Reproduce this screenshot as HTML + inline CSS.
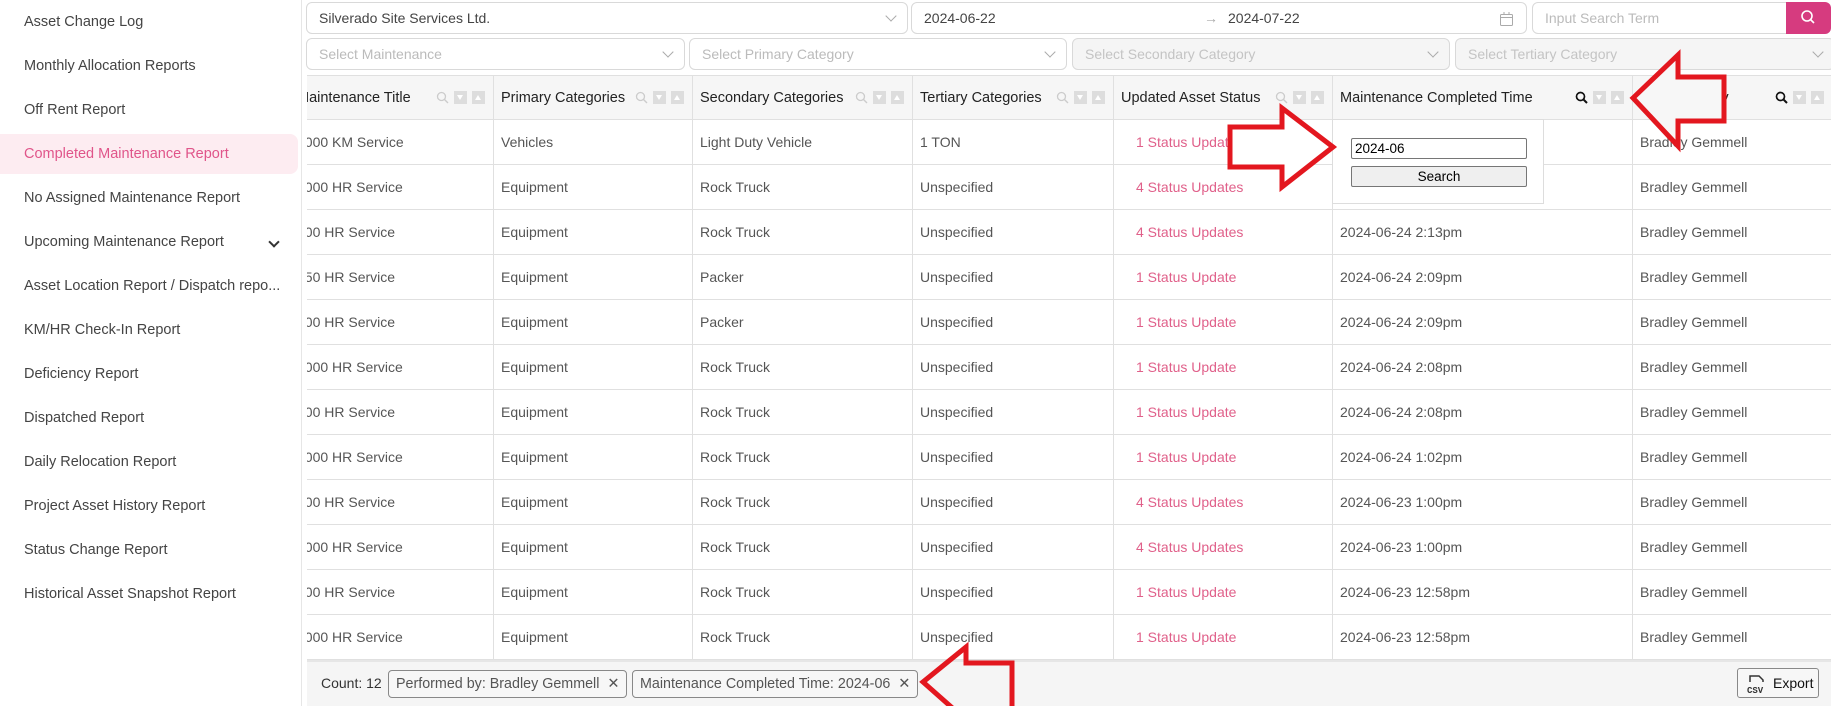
<!DOCTYPE html>
<html><head><meta charset="utf-8"><style>
*{box-sizing:border-box;margin:0;padding:0}
body{width:1831px;height:706px;overflow:hidden;font-family:"Liberation Sans",sans-serif;background:#fff;position:relative;color:#555}
.side{position:absolute;left:0;top:0;width:302px;height:706px;border-right:1px solid #e6e6e6;background:#fff}
.side div{position:absolute;left:0;width:298px;height:40px;line-height:40px;padding-left:24px;font-size:14.5px;color:#444;white-space:nowrap}
.side div.act{background:#fdecf1;color:#e0558a;border-radius:0 8px 8px 0}
.chev{position:absolute;right:20px;top:16px;width:8px;height:8px;border-right:2px solid #333;border-bottom:2px solid #333;transform:rotate(45deg)}
.f{position:absolute;border:1px solid #d9d9d9;border-radius:6px;background:#fff;font-size:14px;line-height:30px;padding-left:12px;color:#444;white-space:nowrap}
.f.ph{color:#bbb}
.f.dis{background:#f5f5f5;color:#c4c4c4}
.v{position:absolute;right:12px;top:9px;width:8px;height:8px;border-right:1px solid #aaa;border-bottom:1px solid #aaa;transform:rotate(45deg)}
.tw{position:absolute;left:307px;top:75px;width:1524px;height:585px;overflow:hidden}
table{position:absolute;left:-18px;top:0;border-collapse:collapse;table-layout:fixed;width:1543px}
td,th{border:1px solid #e0e0e0;white-space:nowrap;overflow:hidden;font-size:14px;text-align:left}
th{height:44px;background:#f6f6f6;color:#222;font-weight:normal;padding-left:7px;position:relative;font-size:14.5px}
td{height:45px;padding-left:7px;color:#555}
td.s{color:#e0608a;padding-left:22px}
.ic{position:absolute;right:8px;top:15px;display:flex;gap:5px;align-items:center}
.b{width:13px;height:13px;background:#ddd;position:relative}
.b.d:after{content:"";position:absolute;left:3px;top:4px;border-left:3.5px solid transparent;border-right:3.5px solid transparent;border-top:5px solid #fff}
.b.u:after{content:"";position:absolute;left:3px;top:4px;border-left:3.5px solid transparent;border-right:3.5px solid transparent;border-bottom:5px solid #fff}
.foot{position:absolute;left:307px;top:660px;width:1524px;height:46px;background:#f5f5f5;border-top:2px solid #e6e6e6}
.chip{position:absolute;top:8px;height:28px;border:1px solid #888;border-radius:4px;background:#f7f7f7;font-size:14.3px;line-height:26px;padding:0 7px;color:#555;white-space:nowrap}
.pop{position:absolute;left:1332px;top:119px;width:212px;height:85px;background:#fff;border:1px solid #ddd}
</style></head><body>
<div class="side">
<div style="top:2px">Asset Change Log</div>
<div style="top:46px">Monthly Allocation Reports</div>
<div style="top:90px">Off Rent Report</div>
<div class="act" style="top:134px">Completed Maintenance Report</div>
<div style="top:178px">No Assigned Maintenance Report</div>
<div style="top:222px">Upcoming Maintenance Report<span class="chev"></span></div>
<div style="top:266px">Asset Location Report / Dispatch repo...</div>
<div style="top:310px">KM/HR Check-In Report</div>
<div style="top:354px">Deficiency Report</div>
<div style="top:398px">Dispatched Report</div>
<div style="top:442px">Daily Relocation Report</div>
<div style="top:486px">Project Asset History Report</div>
<div style="top:530px">Status Change Report</div>
<div style="top:574px">Historical Asset Snapshot Report</div>
</div>

<div class="f" style="left:306px;top:2px;width:602px;height:32px">Silverado Site Services Ltd.<span class="v"></span></div>
<div class="f" style="left:911px;top:2px;width:616px;height:32px">2024-06-22<span style="position:absolute;left:292px;color:#aaa">→</span><span style="position:absolute;left:316px">2024-07-22</span><svg style="position:absolute;right:13px;top:9px" width="13" height="14"><rect x="0.5" y="2.5" width="12" height="11" rx="1" fill="none" stroke="#aaa"/><line x1="0.5" y1="5.5" x2="12.5" y2="5.5" stroke="#aaa"/><line x1="4" y1="0" x2="4" y2="3" stroke="#aaa"/><line x1="9" y1="0" x2="9" y2="3" stroke="#aaa"/></svg></div>
<div class="f ph" style="left:1532px;top:2px;width:260px;height:32px">Input Search Term</div>
<div style="position:absolute;left:1786px;top:2px;width:45px;height:32px;background:#d63b7f;border-radius:0 6px 6px 0"><svg width="45" height="32"><circle cx="21" cy="14" r="5" fill="none" stroke="#fff" stroke-width="1.6"/><line x1="25" y1="18" x2="28" y2="21" stroke="#fff" stroke-width="1.6"/></svg></div>

<div class="f ph" style="left:306px;top:38px;width:379px;height:32px">Select Maintenance<span class="v"></span></div>
<div class="f ph" style="left:689px;top:38px;width:378px;height:32px">Select Primary Category<span class="v"></span></div>
<div class="f dis" style="left:1072px;top:38px;width:378px;height:32px">Select Secondary Category<span class="v"></span></div>
<div class="f dis" style="left:1455px;top:38px;width:380px;height:32px">Select Tertiary Category<span class="v"></span></div>

<div class="tw"><table>
<colgroup><col style="width:204px"><col style="width:199px"><col style="width:220px"><col style="width:201px"><col style="width:219px"><col style="width:300px"><col style="width:200px"></colgroup>
<tr><th>Maintenance Title<span class="ic"><svg width="13" height="13"><circle cx="5.5" cy="5.5" r="4" fill="none" stroke="#ccc" stroke-width="1.3"/><line x1="8.5" y1="8.5" x2="12" y2="12" stroke="#ccc" stroke-width="1.4"/></svg><span class="b d"></span><span class="b u"></span></span></th>
<th>Primary Categories<span class="ic"><svg width="13" height="13"><circle cx="5.5" cy="5.5" r="4" fill="none" stroke="#ccc" stroke-width="1.3"/><line x1="8.5" y1="8.5" x2="12" y2="12" stroke="#ccc" stroke-width="1.4"/></svg><span class="b d"></span><span class="b u"></span></span></th>
<th>Secondary Categories<span class="ic"><svg width="13" height="13"><circle cx="5.5" cy="5.5" r="4" fill="none" stroke="#ccc" stroke-width="1.3"/><line x1="8.5" y1="8.5" x2="12" y2="12" stroke="#ccc" stroke-width="1.4"/></svg><span class="b d"></span><span class="b u"></span></span></th>
<th>Tertiary Categories<span class="ic"><svg width="13" height="13"><circle cx="5.5" cy="5.5" r="4" fill="none" stroke="#ccc" stroke-width="1.3"/><line x1="8.5" y1="8.5" x2="12" y2="12" stroke="#ccc" stroke-width="1.4"/></svg><span class="b d"></span><span class="b u"></span></span></th>
<th>Updated Asset Status<span class="ic"><svg width="13" height="13"><circle cx="5.5" cy="5.5" r="4" fill="none" stroke="#ccc" stroke-width="1.3"/><line x1="8.5" y1="8.5" x2="12" y2="12" stroke="#ccc" stroke-width="1.4"/></svg><span class="b d"></span><span class="b u"></span></span></th>
<th>Maintenance Completed Time<span class="ic"><svg width="13" height="13"><circle cx="5.5" cy="5.5" r="4" fill="none" stroke="#111" stroke-width="1.7"/><line x1="8.5" y1="8.5" x2="12" y2="12" stroke="#111" stroke-width="2"/></svg><span class="b d"></span><span class="b u"></span></span></th>
<th>Performed By<span class="ic"><svg width="13" height="13"><circle cx="5.5" cy="5.5" r="4" fill="none" stroke="#111" stroke-width="1.7"/><line x1="8.5" y1="8.5" x2="12" y2="12" stroke="#111" stroke-width="2"/></svg><span class="b d"></span><span class="b u"></span></span></th></tr>
<tr><td>1000 KM Service</td><td>Vehicles</td><td>Light Duty Vehicle</td><td>1 TON</td><td class="s">1 Status Update</td><td></td><td>Bradley Gemmell</td></tr>
<tr><td>1000 HR Service</td><td>Equipment</td><td>Rock Truck</td><td>Unspecified</td><td class="s">4 Status Updates</td><td></td><td>Bradley Gemmell</td></tr>
<tr><td>500 HR Service</td><td>Equipment</td><td>Rock Truck</td><td>Unspecified</td><td class="s">4 Status Updates</td><td>2024-06-24 2:13pm</td><td>Bradley Gemmell</td></tr>
<tr><td>250 HR Service</td><td>Equipment</td><td>Packer</td><td>Unspecified</td><td class="s">1 Status Update</td><td>2024-06-24 2:09pm</td><td>Bradley Gemmell</td></tr>
<tr><td>500 HR Service</td><td>Equipment</td><td>Packer</td><td>Unspecified</td><td class="s">1 Status Update</td><td>2024-06-24 2:09pm</td><td>Bradley Gemmell</td></tr>
<tr><td>1000 HR Service</td><td>Equipment</td><td>Rock Truck</td><td>Unspecified</td><td class="s">1 Status Update</td><td>2024-06-24 2:08pm</td><td>Bradley Gemmell</td></tr>
<tr><td>500 HR Service</td><td>Equipment</td><td>Rock Truck</td><td>Unspecified</td><td class="s">1 Status Update</td><td>2024-06-24 2:08pm</td><td>Bradley Gemmell</td></tr>
<tr><td>1000 HR Service</td><td>Equipment</td><td>Rock Truck</td><td>Unspecified</td><td class="s">1 Status Update</td><td>2024-06-24 1:02pm</td><td>Bradley Gemmell</td></tr>
<tr><td>500 HR Service</td><td>Equipment</td><td>Rock Truck</td><td>Unspecified</td><td class="s">4 Status Updates</td><td>2024-06-23 1:00pm</td><td>Bradley Gemmell</td></tr>
<tr><td>1000 HR Service</td><td>Equipment</td><td>Rock Truck</td><td>Unspecified</td><td class="s">4 Status Updates</td><td>2024-06-23 1:00pm</td><td>Bradley Gemmell</td></tr>
<tr><td>500 HR Service</td><td>Equipment</td><td>Rock Truck</td><td>Unspecified</td><td class="s">1 Status Update</td><td>2024-06-23 12:58pm</td><td>Bradley Gemmell</td></tr>
<tr><td>1000 HR Service</td><td>Equipment</td><td>Rock Truck</td><td>Unspecified</td><td class="s">1 Status Update</td><td>2024-06-23 12:58pm</td><td>Bradley Gemmell</td></tr>
</table></div>

<div class="pop">
<div style="position:absolute;left:18px;top:18px;width:176px;height:21px;border:1px solid #767676;border-radius:2px;font-size:13.5px;line-height:19px;padding-left:3px;color:#000">2024-06</div>
<div style="position:absolute;left:18px;top:46px;width:176px;height:21px;border:1px solid #767676;border-radius:2px;background:#efefef;font-size:13.5px;line-height:19px;text-align:center;color:#000">Search</div>
</div>

<div class="foot">
<span style="position:absolute;left:14px;top:13px;font-size:14px;color:#333">Count: 12</span>
<span class="chip" style="left:81px">Performed by: Bradley Gemmell &nbsp;✕</span>
<span class="chip" style="left:325px">Maintenance Completed Time: 2024-06 &nbsp;✕</span>
<span style="position:absolute;right:12px;top:6px;width:82px;height:30px;border:1px solid #888;border-radius:3px;background:#f7f7f7;font-size:14px;line-height:28px;color:#111;padding-left:35px">Export<svg style="position:absolute;left:8px;top:4px" width="22" height="22"><path d="M4 9V3h9l4 4v2" fill="none" stroke="#333" stroke-width="1.5"/><text x="1" y="20" font-size="9" font-family="Liberation Mono" font-weight="bold" fill="#333">CSV</text></svg></span>
</div>

<svg style="position:absolute;left:0;top:0" width="1831" height="706">
<polygon points="1633,98 1678,55 1678,77 1724,77 1724,121 1678,121 1678,146" fill="#f7f7f7" stroke="#e3171f" stroke-width="5" stroke-linejoin="miter"/>
<polygon points="1333,147 1282,108 1282,127 1230,127 1230,167 1282,167 1282,187" fill="#fff" stroke="#e3171f" stroke-width="5"/>
<polygon points="923,682 966,647 966,663 1012,663 1012,710 966,710 966,720" fill="none" stroke="#e3171f" stroke-width="5"/>
</svg>
</body></html>
